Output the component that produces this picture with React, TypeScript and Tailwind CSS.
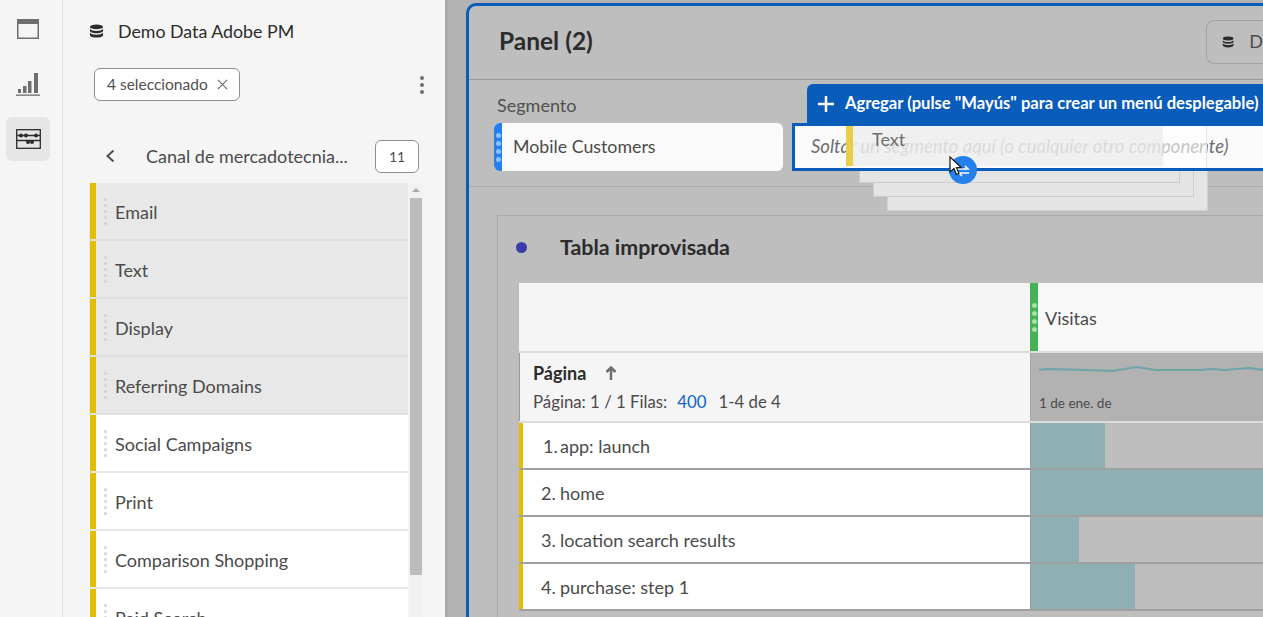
const Grip = ({ className = "" }: { className?: string }) => (
  <span className={"flex flex-col gap-[3px] " + className}>
    {[0, 1, 2, 3, 4].map((i) => (
      <span key={i} className="block h-[3px] w-[3px] rounded-full bg-[#d4d4d4]" />
    ))}
  </span>
);

const Dots = ({ color }: { color: string }) => (
  <span className="flex flex-col items-center gap-[3px]">
    {[0, 1, 2, 3].map((i) => (
      <span key={i} className={"block h-[5px] w-[5px] rounded-full " + color} />
    ))}
  </span>
);

const Db = ({ className = "" }: { className?: string }) => (
  <svg viewBox="0 0 16 14" className={className} fill="#2c2c2c">
    <ellipse cx="8" cy="2.6" rx="7" ry="2.6" />
    <path d="M1 4.6C2 6.2 5 7 8 7s6-.8 7-2.4v2.2C15 8.4 12 9.4 8 9.4S1 8.4 1 6.8Z" />
    <path d="M1 8.6C2 10.2 5 11 8 11s6-.8 7-2.4v2.6C15 12.9 12 14 8 14s-7-1.100-7-2.800Z" />
  </svg>
);

const items = ["Email", "Text", "Display", "Referring Domains", "Social Campaigns", "Print", "Comparison Shopping", "Paid Search"];
const rows = [
  { n: "1.", pl: "pl-[20px]", nw: "w-[17px]", t: "app: launch", w: 74 },
  { n: "2.", pl: "pl-[18px]", nw: "w-[19px]", t: "home", w: 300 },
  { n: "3.", pl: "pl-[18px]", nw: "w-[19px]", t: "location search results", w: 48 },
  { n: "4.", pl: "pl-[18px]", nw: "w-[19px]", t: "purchase: step 1", w: 104 },
];

export default function App() {
  return (
    <div className="flex h-[617px] w-[1263px] overflow-hidden bg-[#b3b3b3] font-['Lato','Noto_Sans',sans-serif] text-[#2c2c2c]">
      {/* Rail */}
      <nav className="flex w-[63px] shrink-0 flex-col items-center border-r border-[#e1e1e1] bg-[#f5f5f5] pr-[6px] pt-[19px]">
        <svg viewBox="0 0 22 20" className="h-[20px] w-[22px]" fill="none">
          <rect x="0.75" y="0.75" width="20.500" height="18.500" stroke="#6e6e6e" strokeWidth="1.500" />
          <rect x="1" y="1" width="20" height="4" fill="#6e6e6e" />
        </svg>
        <svg viewBox="0 0 24 23" className="mt-[34px] h-[23px] w-[24px]" fill="#6e6e6e">
          <rect x="2" y="16" width="3" height="4" />
          <rect x="7" y="13" width="3.500" height="7" />
          <rect x="12" y="8" width="3.500" height="12" />
          <rect x="18" y="0" width="4" height="20" />
          <rect x="0" y="21.500" width="24" height="1.300" />
        </svg>
        <div className="mt-[21px] flex h-[44px] w-[44px] items-center justify-center rounded-md bg-[#e6e6e6]">
          <svg viewBox="0 0 25 20" className="h-[20px] w-[25px]" fill="none" stroke="#2c2c2c" strokeWidth="1.300">
            <rect x="0.700" y="0.700" width="23.600" height="18.600" />
            <path d="M1 6.500H24M1 11.500H24" />
            <g fill="#2c2c2c" stroke="none">
              <circle cx="5" cy="6.500" r="2" /><circle cx="10" cy="6.500" r="2" /><circle cx="20" cy="6.500" r="2" />
              <circle cx="12" cy="13" r="2" /><circle cx="16" cy="13" r="2" />
            </g>
          </svg>
        </div>
      </nav>

      {/* Sidebar */}
      <aside className="flex w-[382px] shrink-0 flex-col bg-[#f5f5f5] pl-[26px]">
        <div className="mt-[19px] flex h-[24px] items-center">
          <Db className="h-[14px] w-[15px]" />
          <span className="ml-[14px] text-[17.800px] leading-[24px] text-[#2c2c2c]">Demo Data Adobe PM</span>
        </div>
        <div className="mt-[25px] flex h-[33px] items-center pl-[5px] pr-[21px]">
          <div className="flex h-[33px] w-[146px] items-center rounded-[6px] border border-[#8e8e8e] bg-white pl-[12px] text-[15.500px] text-[#505050]">
            4 seleccionado
            <svg viewBox="0 0 12 12" className="ml-[9px] h-[11px] w-[11px]" stroke="#6e6e6e" strokeWidth="1.300"><path d="M1 1l10 10M11 1L1 11" /></svg>
          </div>
          <span className="ml-auto flex flex-col gap-[3px]">
            {[0, 1, 2].map((i) => <span key={i} className="block h-[4px] w-[4px] rounded-full bg-[#6e6e6e]" />)}
          </span>
        </div>
        <div className="mt-[38px] flex h-[34px] items-center pl-[16px]">
          <svg viewBox="0 0 10 14" className="h-[14px] w-[10px]" fill="none" stroke="#505050" strokeWidth="2"><path d="M8.500 1.500 2.500 7l6 5.500" /></svg>
          <span className="ml-[31px] w-[229px] text-[18px] leading-[24px] text-[#4b4b4b]">Canal de mercadotecnia...</span>
          <span className="flex h-[33px] w-[44px] items-center justify-center rounded-[6px] border border-[#8e8e8e] bg-white text-[14px] text-[#505050]">11</span>
        </div>
        <div className="mt-[10px] flex min-h-0 flex-1 pr-[22px]">
          <ul className="flex w-[320px] flex-col overflow-hidden">
            {items.map((t, i) => (
              <li key={t} className={"flex h-[58px] shrink-0 items-center border-b-2 pl-[1px] " + (i < 4 ? "border-[#e0e0e0] bg-[#e8e8e8]" : "border-[#e8e8e8] bg-white")}>
                <span className="h-full w-[6px] shrink-0 bg-[#e3bd00]" />
                <Grip className="ml-[8px]" />
                <span className="ml-[8px] pt-[2px] text-[18px] text-[#4b4b4b]">{t}</span>
              </li>
            ))}
          </ul>
          <div className="ml-[1px] flex w-[14px] flex-col items-center bg-[#f1f1f1]">
            <span className="mt-[5px] h-0 w-0 border-x-[4px] border-b-[4px] border-x-transparent border-b-[#a8a8a8]" />
            <span className="mt-[6px] h-[377px] w-[12px] bg-[#bcbcbc]" />
          </div>
        </div>
      </aside>

      {/* Divider */}
      <div className="w-[3px] shrink-0 bg-[#a9a9a9]" />

      {/* Main */}
      <main className="flex min-w-0 flex-1 flex-col pl-[18px] pt-[3px]">
        <section className="relative flex flex-1 flex-col rounded-tl-[10px] border-l-[3px] border-t-[3px] border-[#0a5cba] bg-[#bebebe]">
          <header className="flex h-[74px] shrink-0 items-center border-b border-[#9a9a9a] pl-[30px]">
            <h1 className="mb-[2px] text-[24.500px] font-bold text-[#2c2c2c]">Panel (2)</h1>
            <div className="mb-[2px] ml-auto flex h-[44px] w-[57px] items-center rounded-l-[8px] border border-r-0 border-[#a3a3a3] pl-[15px]">
              <Db className="h-[14px] w-[15px]" />
              <span className="ml-[15px] text-[18px] text-[#4b4b4b]">D</span>
            </div>
          </header>
          <div className="flex h-[107px] shrink-0 items-end border-b border-[#adadad] pb-[15px] pl-[25px]">
            <div className="w-[289px]">
              <div className="mb-[6px] pl-[3px] text-[18px] leading-[24px] text-[#505050]">Segmento</div>
              <div className="flex h-[48px] overflow-hidden rounded-[6px] bg-[#fafafa]">
                <span className="flex w-[8px] items-center justify-center bg-[#2680eb]"><Dots color="bg-[#8cc0ff]" /></span>
                <span className="mb-[2px] ml-[11px] self-center text-[17.800px] text-[#4b4b4b]">Mobile Customers</span>
              </div>
            </div>
            <div className="relative z-10 ml-[9px] flex h-[48px] flex-1 items-center border-[3px] border-r-0 border-[#0a5cba] bg-[#fafafa] pl-[16px] text-[18.500px] italic text-[#6e6e6e]">
              Soltar un segmento aquí (o cualquier otro componente)
            </div>
          </div>
          <div className="ml-[28px] mt-[28px] flex-1 border-l border-t border-[#aaaaaa]">
            <div className="flex h-[67px] items-center pb-[4px] pl-[18px]">
              <span className="h-[11px] w-[11px] rounded-full bg-[#3c3ca8]" />
              <h2 className="ml-[33px] text-[21.400px] font-bold text-[#2c2c2c]">Tabla improvisada</h2>
            </div>
            <div className="ml-[21px]">
              <div className="flex h-[70px] border-b-2 border-[#dcdcdc]">
                <div className="w-[511px] shrink-0 bg-[#f5f5f5]" />
                <div className="flex flex-1 items-center bg-[#f8f8f8]">
                  <span className="flex h-full w-[8px] items-center justify-center bg-[#45b355]"><Dots color="bg-[#a6dfb0]" /></span>
                  <span className="ml-[7px] pt-[2px] text-[18px] text-[#4b4b4b]">Visitas</span>
                </div>
              </div>
              <div className="flex h-[70px] border-b-2 border-[#dcdcdc]">
                <div className="flex w-[511px] shrink-0 flex-col justify-center border-l border-[#9a9a9a] bg-[#f5f5f5] pl-[13px]">
                  <div className="flex items-center text-[18px] font-bold leading-[24px] text-[#2c2c2c]">
                    Página
                    <svg viewBox="0 0 12 14" className="ml-[19px] h-[14px] w-[12px]" fill="none" stroke="#6e6e6e" strokeWidth="2.500"><path d="M6 14V2M1.500 6 6 1.500 10.500 6" /></svg>
                  </div>
                  <div className="mt-[5px] flex text-[16.800px] leading-[24px] text-[#4b4b4b]">
                    Página: 1 / 1 Filas:<span className="ml-[10px] text-[#0d66d0]">400</span><span className="ml-[12px]">1-4 de 4</span>
                  </div>
                </div>
                <div className="flex-1 border-l border-[#a6a6a6] bg-[#b2b2b2] pl-[8px]">
                  <svg viewBox="0 0 225 12" className="mt-[11px] h-[12px] w-[225px]" fill="none" stroke="#6fa5a9" strokeWidth="2">
                    <path d="M0 6 8 5l40 1 25 1 25-4 18 3h45l12-1 12 1 25-2 15 2" />
                  </svg>
                  <div className="mt-[19px] text-[13.500px] leading-[16px] text-[#4b4b4b]">1 de ene. de</div>
                </div>
              </div>
              {rows.map((r) => (
                <div key={r.n} className="flex h-[47px] border-b-2 border-[#a0a0a0]">
                  <div className={"flex w-[511px] shrink-0 items-center border-l-[4px] border-[#e3bd00] bg-white pt-[2px] text-[18px] text-[#4b4b4b] " + r.pl}>
                    <span className={r.nw}>{r.n}</span><span>{r.t}</span>
                  </div>
                  <div className="min-w-0 flex-1 overflow-hidden border-l border-[#9a9a9a] bg-[#bebebe]">
                    <div className="h-full bg-[#8fb0b3]" style={{ width: r.w }} />
                  </div>
                </div>
              ))}
            </div>
          </div>
        </section>
      </main>

      {/* Drag overlay: stacked ghosts behind the drop zone */}
      <div className="pointer-events-none absolute left-[887px] top-[153px] z-[1] h-[58px] w-[321px] border border-[#d0d0d0] bg-[#e4e4e4]" />
      <div className="pointer-events-none absolute left-[873px] top-[139px] z-[1] h-[58px] w-[321px] border border-[#cdcdcd] bg-[#e4e4e4]" />
      <div className="pointer-events-none absolute left-[859px] top-[125px] z-[1] h-[58px] w-[321px] border border-[#cdcdcd] bg-[#e4e4e4]" />
      {/* Ghost veil above the drop zone */}
      <div className="pointer-events-none absolute left-[846px] top-[126px] z-20 h-[42px] w-[361px] border-r border-[#e4e4e4] bg-white/60" />
      <div className="pointer-events-none absolute left-[846px] top-[126px] z-20 flex h-[40px] w-[317px] items-center bg-[#e8e8e8]/60">
        <span className="h-full w-[7px] bg-[#e8cf45]" />
        <span className="-mt-[14px] ml-[19px] text-[18px] text-[#6e6e6e]">Text</span>
      </div>
      <div className="absolute left-[807px] top-[84px] z-30 flex h-[39px] w-[456px] items-center rounded-tl-[6px] bg-[#0a5cba] pl-[11px] text-[16.600px] font-bold text-white">
        <svg viewBox="0 0 16 16" className="h-[16px] w-[16px]" stroke="white" strokeWidth="2.500"><path d="M8 0v16M0 8h16" /></svg>
        <span className="ml-[11px] whitespace-nowrap">Agregar (pulse "Mayús" para crear un menú desplegable)</span>
      </div>
      <div className="absolute left-[949px] top-[156px] z-30 h-[28px] w-[28px] rounded-full bg-[#2680eb]">
        <svg viewBox="0 0 28 28" className="h-[28px] w-[28px]" fill="none" stroke="white" strokeWidth="1.500"><path d="M8 13h11l-3-3M20 17H10l3 3" /></svg>
      </div>
      <svg viewBox="0 0 14 20" className="absolute left-[949px] top-[156px] z-30 h-[20px] w-[14px]">
        <path d="M1 1v15l4-3.500 2.500 6 2.500-1-2.500-5.800h5Z" fill="white" stroke="#1a1a1a" strokeWidth="1.200" />
      </svg>
    </div>
  );
}
